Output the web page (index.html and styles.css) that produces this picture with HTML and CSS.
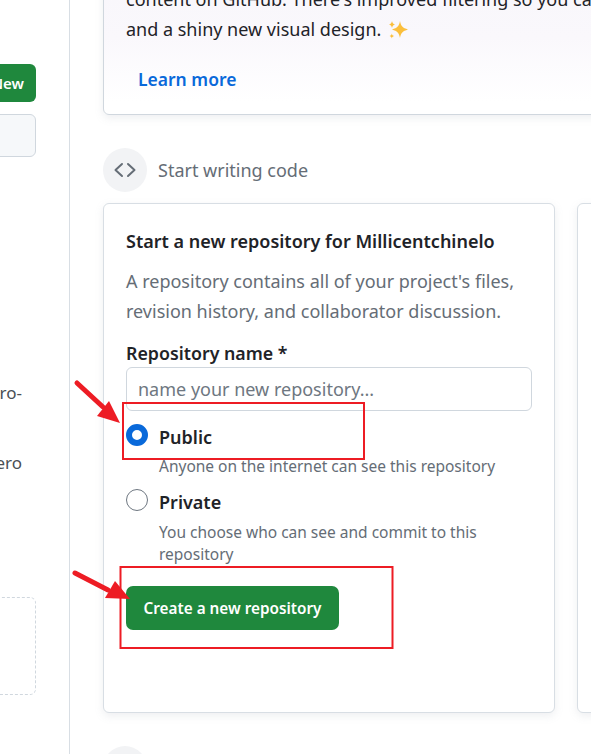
FILE: index.html
```html
<!DOCTYPE html>
<html lang="en">
<head>
    <meta charset="utf-8">
    <meta name="viewport" content="width=device-width, initial-scale=1.0">
    <title>GitHub</title>
    <link rel="stylesheet" href="styles.css">
</head>
<body>
    <div class="sidebar">
        <a class="btn-new">New</a>
        <div class="search"></div>
        <p class="side-text first">micro-</p>
        <p class="side-text second">hero</p>
        <div class="dashed"></div>
    </div>
    <div class="main">
        <div class="card news">
            <p class="news-text">content on GitHub. There's improved filtering so you can<br>and a shiny new visual design.
                <svg class="sparkles" viewBox="0 0 20 20" width="20" height="20"><path d="M12 1c.9 5 2.600 6.800 8 8.500-5.400 1.700-7.100 3.500-8 8.500-.9-5-2.600-6.800-8-8.500 5.400-1.700 7.100-3.500 8-8.500z"/><path d="M4 1c.4 2.100 1.100 2.800 3 3.500-1.900.7-2.600 1.400-3 3.500-.4-2.100-1.100-2.800-3-3.500 1.900-.7 2.600-1.400 3-3.500z"/><path d="M3.800 13.500c.3 1.500.8 2 2.200 2.500-1.400.5-1.900 1-2.200 2.500-.3-1.500-.8-2-2.200-2.500 1.400-.5 1.900-1 2.200-2.500z"/></svg>
            </p>
            <a class="learn">Learn more</a>
        </div>

        <div class="section-head">
            <span class="circle">
                <svg viewBox="0 0 24 24" width="24" height="24" fill="none" stroke="#656d76" stroke-width="2" stroke-linecap="round" stroke-linejoin="round"><path d="M9 6l-6.500 6L9 18"/><path d="M15 6l6.500 6L15 18"/></svg>
            </span>
            <span class="section-title">Start writing code</span>
        </div>

        <div class="cards">
            <div class="card repo">
                <h3 class="repo-title">Start a new repository for Millicentchinelo</h3>
                <p class="repo-desc">A repository contains all of your project's files,<br>revision history, and collaborator discussion.</p>
                <label class="field-label">Repository name *</label>
                <input class="name-input" type="text" placeholder="name your new repository...">
                <div class="option public">
                    <span class="radio checked"></span>
                    <div>
                        <div class="option-name">Public</div>
                        <div class="option-note">Anyone on the internet can see this repository</div>
                    </div>
                </div>
                <div class="option private">
                    <span class="radio"></span>
                    <div>
                        <div class="option-name">Private</div>
                        <div class="option-note">You choose who can see and commit to this<br>repository</div>
                    </div>
                </div>
                <button class="create">Create a new repository</button>
            </div>
            <div class="card next"></div>
        </div>

        <div class="section-head">
            <span class="circle"></span>
        </div>
    </div>

    <!-- annotations drawn on top of the screenshot -->
    <svg class="marks" viewBox="0 0 591 754" width="591" height="754">
        <rect x="123" y="403" width="241" height="56" fill="none" stroke="#ed1c24" stroke-width="2"/>
        <rect x="120.500" y="567" width="272" height="81" fill="none" stroke="#ed1c24" stroke-width="2"/>
        <path d="M77 383l26 24" stroke="#ed1c24" stroke-width="5" stroke-linecap="round"/>
        <path d="M120 423l-23-7 12-15z" fill="#ed1c24"/>
        <path d="M75 573l33 17" stroke="#ed1c24" stroke-width="5" stroke-linecap="round"/>
        <path d="M130 599l-25-1 10-17z" fill="#ed1c24"/>
    </svg>
</body>
</html>
```

FILE: styles.css
```css
html, body {
    height: 100%;
}
body {
    margin: 0;
    display: flex;
    height: 754px;
    overflow: hidden;
    position: relative;
    background-color: white;
    color: #1f2328;
    font-family: "Noto Sans", "Open Sans", sans-serif;
}

/* left column, mostly cut off */
.sidebar {
    flex: none;
    box-sizing: border-box;
    width: 70px;
    padding-top: 64px;
    padding-right: 33px;
    border-right: 1px solid #d8dee4;
    display: flex;
    flex-direction: column;
    align-items: flex-end;
    overflow: hidden;
}
.btn-new {
    flex: none;
    box-sizing: border-box;
    width: 70px;
    height: 38px;
    padding-right: 12px;
    border-radius: 6px;
    background-color: #1f883d;
    color: white;
    font-size: 15px;
    font-weight: 600;
    line-height: 38px;
    text-align: right;
}
.search {
    flex: none;
    box-sizing: border-box;
    width: 70px;
    height: 43px;
    margin-top: 12px;
    border: 1px solid #d0d7de;
    border-radius: 6px;
    background-color: #f6f8fa;
}
.side-text {
    flex: none;
    margin: 0 14px 0 0;
    font-size: 17px;
    line-height: 24px;
    color: #4a4f55;
    white-space: nowrap;
}
.side-text.first {
    margin-top: 224px;
}
.side-text.second {
    margin-top: 46px;
}
.dashed {
    flex: none;
    box-sizing: border-box;
    width: 70px;
    height: 98px;
    margin-top: 122px;
    border: 1px dashed #d0d7de;
    border-radius: 6px;
}

.main {
    flex: 1;
    min-width: 0;
    padding-left: 33px;
    overflow: hidden;
}
.card {
    box-sizing: border-box;
    border: 1px solid #d8dee4;
    border-radius: 6px;
    background-color: white;
    box-shadow: 0 3px 8px rgba(140, 149, 159, 0.15);
}
.news {
    width: 900px;
    height: 155px;
    margin-top: -40px;
    padding: 23px 22px 0;
    border-color: #d0d7de;
    background: linear-gradient(180deg, #f8f6fb 0%, #faf8fc 50%, white 92%);
}
.news-text {
    margin: 0;
    font-size: 18px;
    line-height: 30px;
    white-space: nowrap;
}
.sparkles {
    fill: #fbbf3c;
    vertical-align: -4px;
    margin-left: 2px;
}
.learn {
    display: block;
    margin-top: 20px;
    padding-left: 12px;
    color: #0969da;
    font-size: 17.500px;
    font-weight: 600;
    line-height: 30px;
}

.section-head {
    display: flex;
    align-items: center;
    gap: 11px;
    margin-top: 33px;
}
.circle {
    flex: none;
    width: 44px;
    height: 44px;
    border-radius: 50%;
    background-color: #f2f3f5;
    display: flex;
    align-items: center;
    justify-content: center;
}
.section-title {
    color: #656d76;
    font-size: 18px;
}

.cards {
    display: flex;
    gap: 22px;
    margin-top: 11px;
}
.repo, .next {
    flex: none;
    width: 452px;
    height: 510px;
}
.repo {
    padding: 23px 22px 0;
}
.repo-title {
    margin: 0;
    font-size: 18px;
    font-weight: 600;
    line-height: 28px;
}
.repo-desc {
    margin: 11px 0 0;
    color: #656d76;
    font-size: 18px;
    line-height: 30px;
    white-space: nowrap;
}
.field-label {
    display: block;
    margin-top: 15px;
    font-size: 17.800px;
    font-weight: 600;
    line-height: 24px;
}
.name-input {
    display: block;
    box-sizing: border-box;
    width: 406px;
    height: 44px;
    margin-top: 2px;
    padding: 0 11px;
    border: 1px solid #d0d7de;
    border-radius: 6px;
    color: #1f2328;
    font-family: inherit;
    font-size: 18px;
}
.name-input::placeholder {
    color: #6e7781;
}
.option {
    display: flex;
    gap: 11px;
}
.public {
    margin-top: 13px;
}
.private {
    margin-top: 12px;
}
.radio {
    flex: none;
    box-sizing: border-box;
    width: 22px;
    height: 22px;
    margin-top: 0;
    border: 1px solid #6e7781;
    border-radius: 50%;
    background-color: white;
}
.radio.checked {
    border: 6px solid #0969da;
}
.option-name {
    font-size: 18px;
    font-weight: 600;
    line-height: 26px;
}
.option-note {
    margin-top: 5px;
    color: #656d76;
    font-size: 15.500px;
    line-height: 22px;
    white-space: nowrap;
}
.private .option-note {
    margin-top: 6px;
}
.create {
    display: block;
    box-sizing: border-box;
    height: 44px;
    width: 213px;
    margin-top: 21px;
    padding: 0;
    border: 0;
    border-radius: 7px;
    background-color: #1f883d;
    color: white;
    font-family: inherit;
    font-size: 15.300px;
    font-weight: 600;
}

.marks {
    position: absolute;
    top: 0;
    left: 0;
    pointer-events: none;
}
```
